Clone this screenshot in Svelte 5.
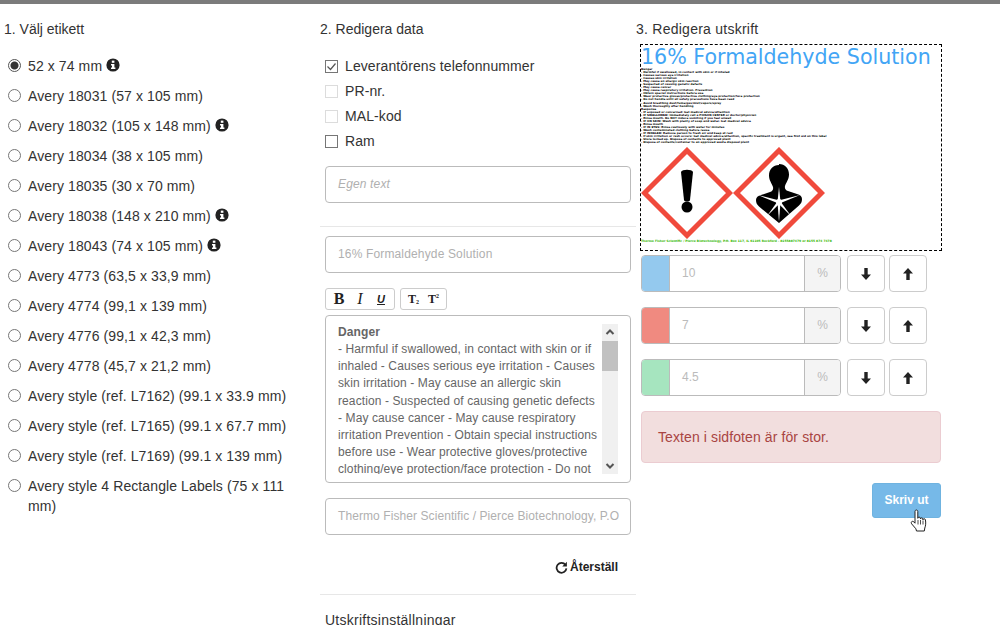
<script>
  const labels = [
    { name: '52 x 74 mm', checked: true, info: true },
    { name: 'Avery 18031 (57 x 105 mm)' },
    { name: 'Avery 18032 (105 x 148 mm)', info: true },
    { name: 'Avery 18034 (38 x 105 mm)' },
    { name: 'Avery 18035 (30 x 70 mm)' },
    { name: 'Avery 18038 (148 x 210 mm)', info: true },
    { name: 'Avery 18043 (74 x 105 mm)', info: true },
    { name: 'Avery 4773 (63,5 x 33,9 mm)' },
    { name: 'Avery 4774 (99,1 x 139 mm)' },
    { name: 'Avery 4776 (99,1 x 42,3 mm)' },
    { name: 'Avery 4778 (45,7 x 21,2 mm)' },
    { name: 'Avery style (ref. L7162) (99.1 x 33.9 mm)' },
    { name: 'Avery style (ref. L7165) (99.1 x 67.7 mm)' },
    { name: 'Avery style (ref. L7169) (99.1 x 139 mm)' },
    { name: 'Avery style 4 Rectangle Labels (75 x 111 mm)' }
  ];

  const checks = [
    { name: 'Leverantörens telefonnummer', checked: true },
    { name: 'PR-nr.', disabled: true },
    { name: 'MAL-kod', disabled: true },
    { name: 'Ram' }
  ];

  const amounts = [
    { value: '10', color: '#94c9ee' },
    { value: '7', color: '#f08a80' },
    { value: '4.5', color: '#a6e5bf' }
  ];

  const hazard = [
    'Danger',
    '- Harmful if swallowed, in contact with skin or if inhaled',
    '- Causes serious eye irritation',
    '- Causes skin irritation',
    '- May cause an allergic skin reaction',
    '- Suspected of causing genetic defects',
    '- May cause cancer',
    '- May cause respiratory irritation. Prevention',
    '- Obtain special instructions before use',
    '- Wear protective gloves/protective clothing/eye protection/face protection',
    '- Do not handle until all safety precautions have been read',
    '- Avoid breathing dust/fume/gas/mist/vapors/spray',
    '- Wash thoroughly after handling',
    '',
    'Response',
    '- IF exposed or concerned: Get medical advice/attention',
    '- IF SWALLOWED: Immediately call a POISON CENTER or doctor/physician',
    '- Rinse mouth. Do NOT induce vomiting if you feel unwell',
    '- IF ON SKIN: Wash with plenty of soap and water. Get medical advice',
    '- Rinse mouth',
    '- IF IN EYES: Rinse cautiously with water for minutes',
    '- Wash contaminated clothing before reuse',
    '- IF INHALED: Remove person to fresh air and keep at rest',
    '- If skin irritation or rash occurs: Get medical advice/attention, specific treatment is urgent, see first aid on this label',
    '- Store locked up. Dispose of contents to approved plant',
    '- Dispose of contents/container to an approved waste disposal plant'
  ];

  const rays = [[46, 40], [25, 48], [67, 48], [34, 69], [58, 69], [46, 75]];

  // thin white spike from the middle of the star out to a tip
  function spike([x, y]) {
    const dx = x - 46;
    const dy = y - 55;
    const len = Math.hypot(dx, dy);
    const nx = (-dy / len) * 1.5;
    const ny = (dx / len) * 1.5;
    return `${46 + nx},${55 + ny} ${x},${y} ${46 - nx},${55 - ny}`;
  }
</script>

<div class="topbar"></div>

<main class="columns">
  <section class="col-labels">
    <h4>1. Välj etikett</h4>
    <ul class="label-list">
      {#each labels as label}
        <li>
          <span class="radio" class:on={label.checked}></span>
          <span>
            {label.name}
            {#if label.info}
              <svg class="info" viewBox="0 0 14 14" width="14" height="14">
                <circle cx="7" cy="7" r="6.6" fill="#222" />
                <rect x="5.8" y="2.6" width="2.6" height="2.2" fill="#fff" />
                <path d="M5 6h3.400v3.600h1v1.500H5V9.600h1V7.500H5z" fill="#fff" />
              </svg>
            {/if}
          </span>
        </li>
      {/each}
    </ul>
  </section>

  <section class="col-data">
    <h4>2. Redigera data</h4>
    <div class="inner">
      <div class="checks">
        {#each checks as check}
          <div class="check-row">
            <span class="box" class:dim={check.disabled}>
              {#if check.checked}
                <svg viewBox="0 0 13 13" width="13" height="13"><path d="M2.500 6.500l3 3 5-6" fill="none" stroke="#555" stroke-width="1.200" /></svg>
              {/if}
            </span>
            {check.name}
          </div>
        {/each}
      </div>
      <div class="field italic">Egen text</div>
    </div>

    <hr class="first" />

    <div class="inner">
      <div class="field">16% Formaldehyde Solution</div>

      <div class="toolbar">
        <div class="tool-group">
          <span class="tool bold">B</span>
          <span class="tool ital">I</span>
          <span class="tool under">U</span>
        </div>
        <div class="tool-group narrow">
          <span class="tool sub">T<small>2</small></span>
          <span class="tool sup">T<small>2</small></span>
        </div>
      </div>

      <div class="editor">
        <div class="editor-text">
          <b>Danger</b><br />
          - Harmful if swallowed, in contact with skin or if inhaled - Causes serious eye irritation - Causes skin irritation - May cause an allergic skin reaction - Suspected of causing genetic defects - May cause cancer - May cause respiratory irritation Prevention - Obtain special instructions before use - Wear protective gloves/protective clothing/eye protection/face protection - Do not handle until all safety precautions have been read
        </div>
        <div class="scrollbar">
          <svg viewBox="0 0 16 16" width="16" height="16"><path d="M4.500 10l3.500-3.500 3.500 3.500" fill="none" stroke="#555" stroke-width="2" /></svg>
          <div class="thumb"></div>
          <svg class="down" viewBox="0 0 16 16" width="16" height="16"><path d="M4.500 6l3.500 3.500 3.500-3.500" fill="none" stroke="#555" stroke-width="2" /></svg>
        </div>
      </div>

      <div class="field footer-field">Thermo Fisher Scientific / Pierce Biotechnology, P.O</div>

      <div class="reset">
        <svg viewBox="0 0 14 14" width="13" height="13">
          <path d="M11.300 4.200A5.300 5.300 0 1 0 12.300 8" fill="none" stroke="#222" stroke-width="1.900" />
          <path d="M12.800 0.800v5h-5z" fill="#222" />
        </svg>
        <b>Återställ</b>
      </div>
    </div>

    <hr class="second" />

    <div class="inner settings">Utskriftsinställningar</div>
  </section>

  <section class="col-print">
    <h4>3. Redigera utskrift</h4>
    <div class="inner-print">
      <div class="preview">
        <div class="title">16% Formaldehyde Solution</div>
        <div class="tiny">
          {#each hazard as line}
            <div>{line || ' '}</div>
          {/each}
        </div>
        <div class="ghs">
          <svg viewBox="0 0 92 92" width="92" height="92">
            <polygon points="46,3.500 88.500,46 46,88.500 3.500,46" fill="#fff" stroke="#f04a3c" stroke-width="5" />
            <path d="M40 25c1-3 11-3 12 0l-3 28c-.3 2-5.700 2-6 0z" fill="#000" />
            <circle cx="46" cy="60" r="5.500" fill="#000" />
          </svg>
          <svg viewBox="0 0 92 92" width="92" height="92">
            <polygon points="46,3.500 88.500,46 46,88.500 3.500,46" fill="#fff" stroke="#f04a3c" stroke-width="5" />
            <path d="M46 17c6 0 10 4.500 10 10.500 0 5-3 8-4 11.500-.5 2.500.5 4 3 5l9 3c3 .8 5 2.500 5 5 0 3-1 4.500-3 6.500L46 76 26 59.500c-2-2-3-3.500-3-6.500 0-2.500 2-4.200 5-5l9-3c2.500-1 3.500-2.500 3-5-1-3.500-4-6.500-4-11.500 0-6 4-10.500 10-10.500z" fill="#000" />
            {#each rays as ray}
              <polygon points={spike(ray)} fill="#fff" />
            {/each}
            <circle cx="46" cy="55" r="3" fill="#fff" />
          </svg>
        </div>
        <div class="supplier">Thermo Fisher Scientific / Pierce Biotechnology, P.O. Box 117, IL 61105 Rockford - 8155887479 or 8155 874 7478</div>
      </div>

      <div class="controls">
        <div class="amounts">
          {#each amounts as amount}
            <div class="amount-row">
              <div class="amount-group">
                <span class="swatch" style="background: {amount.color}"></span>
                <span class="amount-value">{amount.value}</span>
                <span class="unit">%</span>
              </div>
              <span class="arrow-btn">
                <svg viewBox="0 0 12 14" width="12" height="14"><path d="M4.300 1h3.400v6.500H11L6 13 1 7.500h3.300z" fill="#222" /></svg>
              </span>
              <span class="arrow-btn">
                <svg viewBox="0 0 12 14" width="12" height="14"><path d="M4.300 13h3.400V6.500H11L6 1 1 6.500h3.300z" fill="#222" /></svg>
              </span>
            </div>
          {/each}
        </div>

        <div class="alert">Texten i sidfoten är för stor.</div>

        <div class="actions">
          <span class="print-btn">Skriv ut</span>
          <svg class="hand" viewBox="0 0 19 24" width="19" height="24">
            <path d="M5 2.500c0-2 2.800-2 2.800 0v6.800c0-1.600 2.600-1.600 2.600 0v.7c0-1.500 2.500-1.500 2.500 0v.8c0-1.400 2.500-1.400 2.500 0 .6 3 .3 6-.6 8.200l-.5 3H6.500l-.6-2.200-4.300-5c-1.200-1.800.8-3.300 2.200-2l1.200 1.400z" fill="#fff" stroke="#222" stroke-width="1" stroke-linejoin="round" />
            <path d="M8 11v4.500M10.500 11v4.500M13 11.500v4" stroke="#222" stroke-width="0.800" fill="none" />
          </svg>
        </div>
      </div>
    </div>
  </section>
</main>

<style>
  :global(body) {
    margin: 0;
    background: #fff;
    overflow: hidden;
  }

  .topbar {
    height: 4px;
    background: #7b7b7b;
  }

  .columns {
    display: grid;
    grid-template-columns: 320px 316px 364px;
    height: 621px;
    overflow: hidden;
    font-family: "Liberation Sans", Arial, sans-serif;
    font-size: 14px;
    line-height: 20px;
    color: #333;
  }

  h4 {
    margin: 15px 0 0;
    font-size: 14px;
    font-weight: 400;
    line-height: 20px;
  }

  .col-print h4 {
    letter-spacing: 0.25px;
  }

  .col-labels {
    padding-left: 4px;
  }

  .label-list {
    list-style: none;
    margin: 17px 0 0;
    padding: 0 20px 0 4px;
    letter-spacing: 0.1px;
  }

  .label-list li {
    display: flex;
    gap: 7px;
    margin-bottom: 10px;
  }

  .radio {
    flex: none;
    box-sizing: border-box;
    width: 13px;
    height: 13px;
    margin-top: 3px;
    border: 1px solid #767676;
    border-radius: 50%;
    background: #fff;
  }

  .radio.on {
    border-color: #555;
    background: radial-gradient(circle, #333 0, #333 3.500px, #fff 4.500px);
  }

  .info {
    vertical-align: -1px;
  }

  .inner {
    padding: 0 5px;
  }

  .checks {
    margin-top: 17px;
    letter-spacing: 0.1px;
  }

  .check-row {
    display: flex;
    align-items: center;
    gap: 7px;
    height: 20px;
    margin-bottom: 5px;
  }

  .box {
    box-sizing: border-box;
    display: block;
    width: 13px;
    height: 13px;
    border: 1px solid #767676;
    background: #fff;
  }

  .box svg {
    display: block;
    margin: -1px;
  }

  .box.dim {
    border-color: #dcdcdc;
  }

  .field {
    box-sizing: border-box;
    height: 37px;
    padding: 0 12px;
    border: 1px solid #bbb;
    border-radius: 4px;
    font-size: 12px;
    line-height: 35px;
    letter-spacing: 0.15px;
    color: #b0b0b0;
    white-space: nowrap;
    overflow: hidden;
  }

  .italic {
    margin-top: 15px;
    font-style: italic;
  }

  hr {
    border: 0;
    border-top: 1px solid #e7e7e7;
    margin: 0;
  }

  hr.first {
    margin: 23px 0 9px;
  }

  .toolbar {
    display: flex;
    gap: 5px;
    margin-top: 15px;
  }

  .tool-group {
    display: flex;
    align-items: center;
    width: 70px;
    height: 22px;
    box-sizing: border-box;
    padding: 0 3px;
    gap: 1px;
    border: 1px solid #ccc;
    border-radius: 3px;
    color: #222;
  }

  .tool-group.narrow {
    width: 47px;
  }

  .tool {
    width: 20px;
    text-align: center;
    font-family: "Liberation Serif", serif;
    line-height: 20px;
  }

  .tool.bold {
    font-weight: 700;
    font-size: 16px;
  }

  .tool.ital {
    font-style: italic;
    font-size: 16px;
  }

  .tool.under {
    font-family: "Liberation Sans", sans-serif;
    font-style: italic;
    font-weight: 700;
    font-size: 11px;
    text-decoration: underline;
  }

  .tool.sub,
  .tool.sup {
    width: 19px;
    font-size: 12px;
    font-weight: 700;
    white-space: nowrap;
  }

  .tool small {
    font-size: 6px;
    line-height: 0;
  }

  .tool.sub small {
    vertical-align: -1px;
  }

  .tool.sup small {
    vertical-align: 5px;
  }

  .editor {
    display: flex;
    box-sizing: border-box;
    height: 168px;
    margin-top: 5px;
    padding: 8px 12px;
    border: 1px solid #bbb;
    border-radius: 4px;
    font-size: 12px;
    line-height: 17.150px;
    letter-spacing: 0.1px;
    color: #666;
    overflow: hidden;
  }

  .editor-text {
    width: 264px;
    height: 150px;
    overflow: hidden;
  }

  .scrollbar {
    flex: none;
    width: 16px;
    height: 150px;
    background: #f0f0f0;
    display: flex;
    flex-direction: column;
  }

  .scrollbar svg {
    flex: none;
  }

  .thumb {
    height: 30px;
    margin-top: 1px;
    background: #c1c1c1;
  }

  .scrollbar .down {
    margin-top: auto;
  }

  .footer-field {
    margin-top: 15px;
    letter-spacing: 0.08px;
  }

  .reset {
    display: flex;
    align-items: center;
    justify-content: flex-end;
    gap: 2px;
    margin-top: 22px;
    padding-right: 13px;
    font-size: 12px;
    color: #222;
  }

  hr.second {
    margin-top: 17px;
  }

  .settings {
    margin-top: 15px;
    letter-spacing: 0.25px;
  }

  .inner-print {
    padding-left: 4px;
    width: 302px;
  }

  .preview {
    box-sizing: border-box;
    height: 207px;
    margin-top: 5px;
    border: 1px dashed #000;
    overflow: hidden;
  }

  .title {
    font-family: "DejaVu Sans", Verdana, sans-serif;
    font-size: 20.600px;
    line-height: 22px;
    color: #42a5f5;
    white-space: nowrap;
    padding-top: 1px;
  }

  .tiny {
    height: 79px;
    font-family: "DejaVu Sans", Verdana, sans-serif;
    font-size: 2.800px;
    line-height: 3.050px;
    font-weight: 700;
    color: #000;
    white-space: nowrap;
  }

  .ghs {
    display: flex;
  }

  .ghs svg {
    display: block;
    flex: none;
  }

  .supplier {
    font-family: "DejaVu Sans", Verdana, sans-serif;
    font-size: 3px;
    line-height: 5px;
    font-weight: 700;
    color: #35b800;
    white-space: nowrap;
  }

  .controls {
    width: 300px;
    margin: 4px 0 0 1px;
  }

  .amounts {
    display: flex;
    flex-direction: column;
    gap: 15px;
  }

  .amount-row {
    display: flex;
    gap: 4px;
  }

  .amount-group {
    box-sizing: border-box;
    display: flex;
    width: 200px;
    height: 37px;
    margin-right: 2px;
    border: 1px solid #bbb;
    border-radius: 4px;
    overflow: hidden;
    font-size: 12px;
    line-height: 35px;
    color: #bbb;
  }

  .swatch {
    width: 27px;
    border-right: 1px solid #bbb;
  }

  .amount-value {
    flex: 1;
    padding-left: 12px;
  }

  .unit {
    width: 36px;
    box-sizing: border-box;
    text-align: center;
    background: #f4f4f4;
    border-left: 1px solid #bbb;
  }

  .arrow-btn {
    box-sizing: border-box;
    display: flex;
    align-items: center;
    justify-content: center;
    width: 38px;
    height: 37px;
    border: 1px solid #ccc;
    border-radius: 4px;
  }

  .alert {
    box-sizing: border-box;
    height: 52px;
    margin-top: 15px;
    padding: 0 16px;
    border: 1px solid #ebccd1;
    border-radius: 4px;
    background: #f2dede;
    color: #a94442;
    line-height: 50px;
    letter-spacing: 0.1px;
  }

  .actions {
    display: flex;
    justify-content: flex-end;
    position: relative;
    margin-top: 20px;
  }

  .print-btn {
    box-sizing: border-box;
    width: 69px;
    height: 35px;
    border: 1px solid #6fb3e0;
    border-radius: 3px;
    background: #76b9e8;
    color: #fff;
    font-size: 12px;
    font-weight: 700;
    line-height: 33px;
    text-align: center;
  }

  .hand {
    position: absolute;
    left: 269px;
    top: 26px;
  }
</style>
